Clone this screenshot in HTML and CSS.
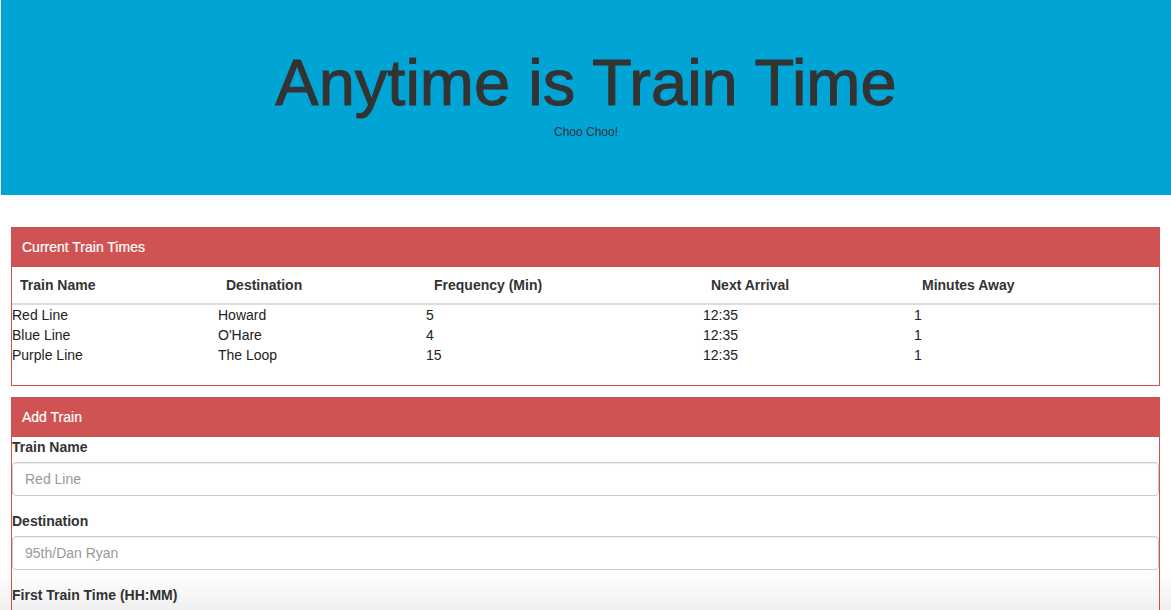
FILE: index.html
```html
<!DOCTYPE html>
<html>
<head>
<meta charset="utf-8">
<title>Anytime is Train Time</title>
<link rel="stylesheet" href="styles.css">
</head>
<body>
<div class="jumbotron">
  <h1 class="title">Anytime is Train Time</h1>
  <p class="subtitle">Choo Choo!</p>
</div>
<div class="panel">
  <div class="panel-heading">Current Train Times</div>
  <table class="table">
    <thead>
      <tr>
        <th class="c1">Train Name</th>
        <th class="c2">Destination</th>
        <th class="c3">Frequency (Min)</th>
        <th class="c4">Next Arrival</th>
        <th class="c5">Minutes Away</th>
      </tr>
    </thead>
    <tbody>
      <tr><td>Red Line</td><td>Howard</td><td>5</td><td>12:35</td><td>1</td></tr>
      <tr><td>Blue Line</td><td>O'Hare</td><td>4</td><td>12:35</td><td>1</td></tr>
      <tr><td>Purple Line</td><td>The Loop</td><td>15</td><td>12:35</td><td>1</td></tr>
    </tbody>
  </table>
</div>
<div class="panel panel-add">
  <div class="panel-heading">Add Train</div>
  <form class="form">
    <div class="form-group">
      <label class="label">Train Name</label>
      <input class="input" type="text" placeholder="Red Line">
    </div>
    <div class="form-group">
      <label class="label">Destination</label>
      <input class="input" type="text" placeholder="95th/Dan Ryan">
    </div>
    <div class="form-group">
      <label class="label">First Train Time (HH:MM)</label>
      <input class="input" type="text" placeholder="05:30">
    </div>
  </form>
</div>
<div class="fade"></div>
</body>
</html>
```
FILE: styles.css
```css
* { box-sizing: border-box; }
html, body { margin: 0; padding: 0; }
body {
  font-family: "Liberation Sans", Arial, Helvetica, sans-serif;
  font-size: 14px;
  line-height: 20px;
  color: #333;
  background: #fff;
  overflow: hidden;
  height: 610px;
}
.jumbotron {
  margin: 0 0 32px 1px;
  height: 195px;
  background: #00a4d5;
  text-align: center;
  padding-top: 48px;
}
.title {
  margin: 0;
  font-size: 65px;
  line-height: 69px;
  font-weight: normal;
  color: #333;
  -webkit-text-stroke: 1px #333;
}
.subtitle {
  margin: 7px 0 0;
  font-size: 12px;
  line-height: 16px;
  color: #333;
}
.panel {
  margin: 0 11px;
  border: 1px solid #cf5353;
  background: #fff;
}
.panel-add {
  margin-top: 11px;
  border-bottom: none;
}
.panel-heading {
  background: #cf5353;
  color: #fff;
  height: 40px;
  padding: 10px 11px 10px;
  margin: -1px -1px 0;
  line-height: 20px;
  -webkit-text-stroke: 0.2px #fff;
}
.table {
  width: 100%;
  border-collapse: collapse;
  border-spacing: 0;
  margin-bottom: 20px;
  table-layout: fixed;
}
.table th {
  text-align: left;
  font-weight: bold;
  padding: 8px;
  line-height: 20px;
  border-bottom: 2px solid #ddd;
}
.table td {
  padding: 0;
  line-height: 20px;
  color: #222;
}
.c1 { width: 206px; }
.c2 { width: 208px; }
.c3 { width: 277px; }
.c4 { width: 211px; }
.form { padding: 0; }
.form-group { margin-bottom: 15px; }
.label {
  display: block;
  font-weight: bold;
  margin-bottom: 5px;
  line-height: 20px;
}
.input {
  display: block;
  width: 100%;
  height: 34px;
  padding: 6px 12px;
  font-family: inherit;
  font-size: 14px;
  color: #555;
  border: 1px solid #ccc;
  border-radius: 4px;
  box-shadow: inset 0 1px 1px rgba(0,0,0,0.075);
  background: #fff;
}
.input::placeholder { color: #999; }
.fade {
  position: fixed;
  left: 0;
  right: 0;
  bottom: 0;
  height: 40px;
  pointer-events: none;
  background: linear-gradient(rgba(0,0,0,0), rgba(0,0,0,0.06));
}
```
